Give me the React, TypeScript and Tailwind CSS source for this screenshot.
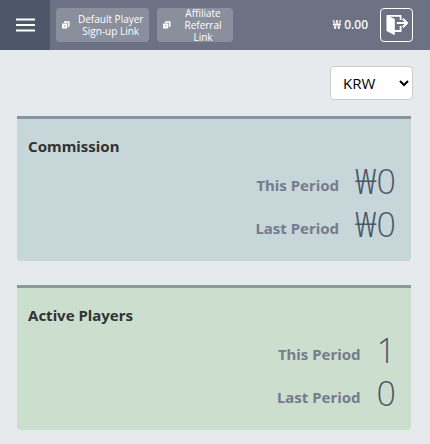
import React, { useState } from "react";

const stats = [
  {
    title: "Commission",
    color: "bg-[#c7d6d9] border-[#87949f]",
    rows: [
      { label: "This Period", value: "₩0" },
      { label: "Last Period", value: "₩0" },
    ],
  },
  {
    title: "Active Players",
    color: "bg-[#ccdfcf] border-[#8a999a]",
    rows: [
      { label: "This Period", value: "1" },
      { label: "Last Period", value: "0" },
    ],
  },
];

function CopyIcon() {
  return (
    <svg width="8" height="8" viewBox="0 0 8 8" className="shrink-0" aria-hidden="true">
      <path d="M2.8 2V1h4v4H6" fill="none" stroke="white" strokeWidth="1.5" />
      <path fillRule="evenodd" d="M0 2.5h5.3v5H0zM1.8 4.4v1.2h1.7V4.4z" fill="white" />
    </svg>
  );
}

function LogoutIcon() {
  return (
    <svg width="22" height="22" viewBox="0 0 22 22" aria-hidden="true">
      <path d="M.5 1 8.8 5v16.2L.5 17z" fill="white" />
      <path d="M1 1.8h13.6V6M14.6 12v5H8.5" fill="none" stroke="white" strokeWidth="1.8" />
      <path d="M10.8 9h9.7M16.8 4.8 21 9l-4.2 4.2" fill="none" stroke="white" strokeWidth="2" />
    </svg>
  );
}

function LinkButton({ className, children }: { className: string; children: React.ReactNode }) {
  return (
    <button
      type="button"
      className={`flex h-[34px] items-center gap-2 rounded bg-[#8a8f9d] px-1.5 font-['Open_Sans',sans-serif] text-[10px] leading-3 font-medium whitespace-nowrap ${className}`}
    >
      <CopyIcon />
      <span className="flex-1 text-center">{children}</span>
    </button>
  );
}

export default function App() {
  const [currency, setCurrency] = useState("KRW");

  return (
    <div className="min-h-screen bg-[#e6eaed] font-['Noto_Sans','Noto_Sans_CJK_KR',sans-serif]">
      {/* Top bar */}
      <header className="flex h-[50px] items-center bg-[#6c7283] pr-[17px] text-white">
        <button type="button" aria-label="Menu" className="flex h-full w-[50px] items-center justify-center bg-[#4c586a]">
          <svg width="19" height="14" viewBox="0 0 19 14" aria-hidden="true">
            <path d="M0 1.5h19M0 7h19M0 12.5h19" stroke="white" strokeWidth="2" />
          </svg>
        </button>
        <div className="ml-1.5 flex gap-2">
          <LinkButton className="w-[93px]">
            Default Player<br />Sign-up Link
          </LinkButton>
          <LinkButton className="w-[76px]">
            Affiliate<br />Referral<br />Link
          </LinkButton>
        </div>
        <span className="ml-auto text-xs font-medium">₩ 0.00</span>
        <button
          type="button"
          aria-label="Log out"
          className="ml-3 flex h-[34px] w-[33px] items-center justify-center rounded border border-white"
        >
          <LogoutIcon />
        </button>
      </header>

      <main className="px-[17px] pt-4 pb-[15px]">
        {/* Currency */}
        <div className="flex justify-end">
          <select
            aria-label="Currency"
            value={currency}
            onChange={(e) => setCurrency(e.target.value)}
            className="h-[34px] w-[83px] rounded border border-[#cccccc] bg-white pl-2 font-['Open_Sans',sans-serif] text-[15px] text-black"
          >
            <option>KRW</option>
            <option>USD</option>
          </select>
        </div>

        <div className="mt-4 mr-0.5 space-y-6">
          {stats.map((stat) => (
            <section key={stat.title} className={`rounded-b border-t-[3px] px-[11px] pt-[13px] pb-[15px] ${stat.color}`}>
              <h2 className="text-[15px] leading-7 font-bold text-[#333333]">{stat.title}</h2>
              <dl className="pr-1">
                {stat.rows.map((row) => (
                  <div key={row.label} className="flex h-[43px] items-center justify-end gap-4">
                    <dt className="pt-2 text-[15px] font-bold text-[#767c8c]">{row.label}</dt>
                    <dd className="font-['Open_Sans','Noto_Sans',sans-serif] text-[34px] leading-[43px] font-light text-[#4c586a]">{row.value}</dd>
                  </div>
                ))}
              </dl>
            </section>
          ))}
        </div>
      </main>
    </div>
  );
}
